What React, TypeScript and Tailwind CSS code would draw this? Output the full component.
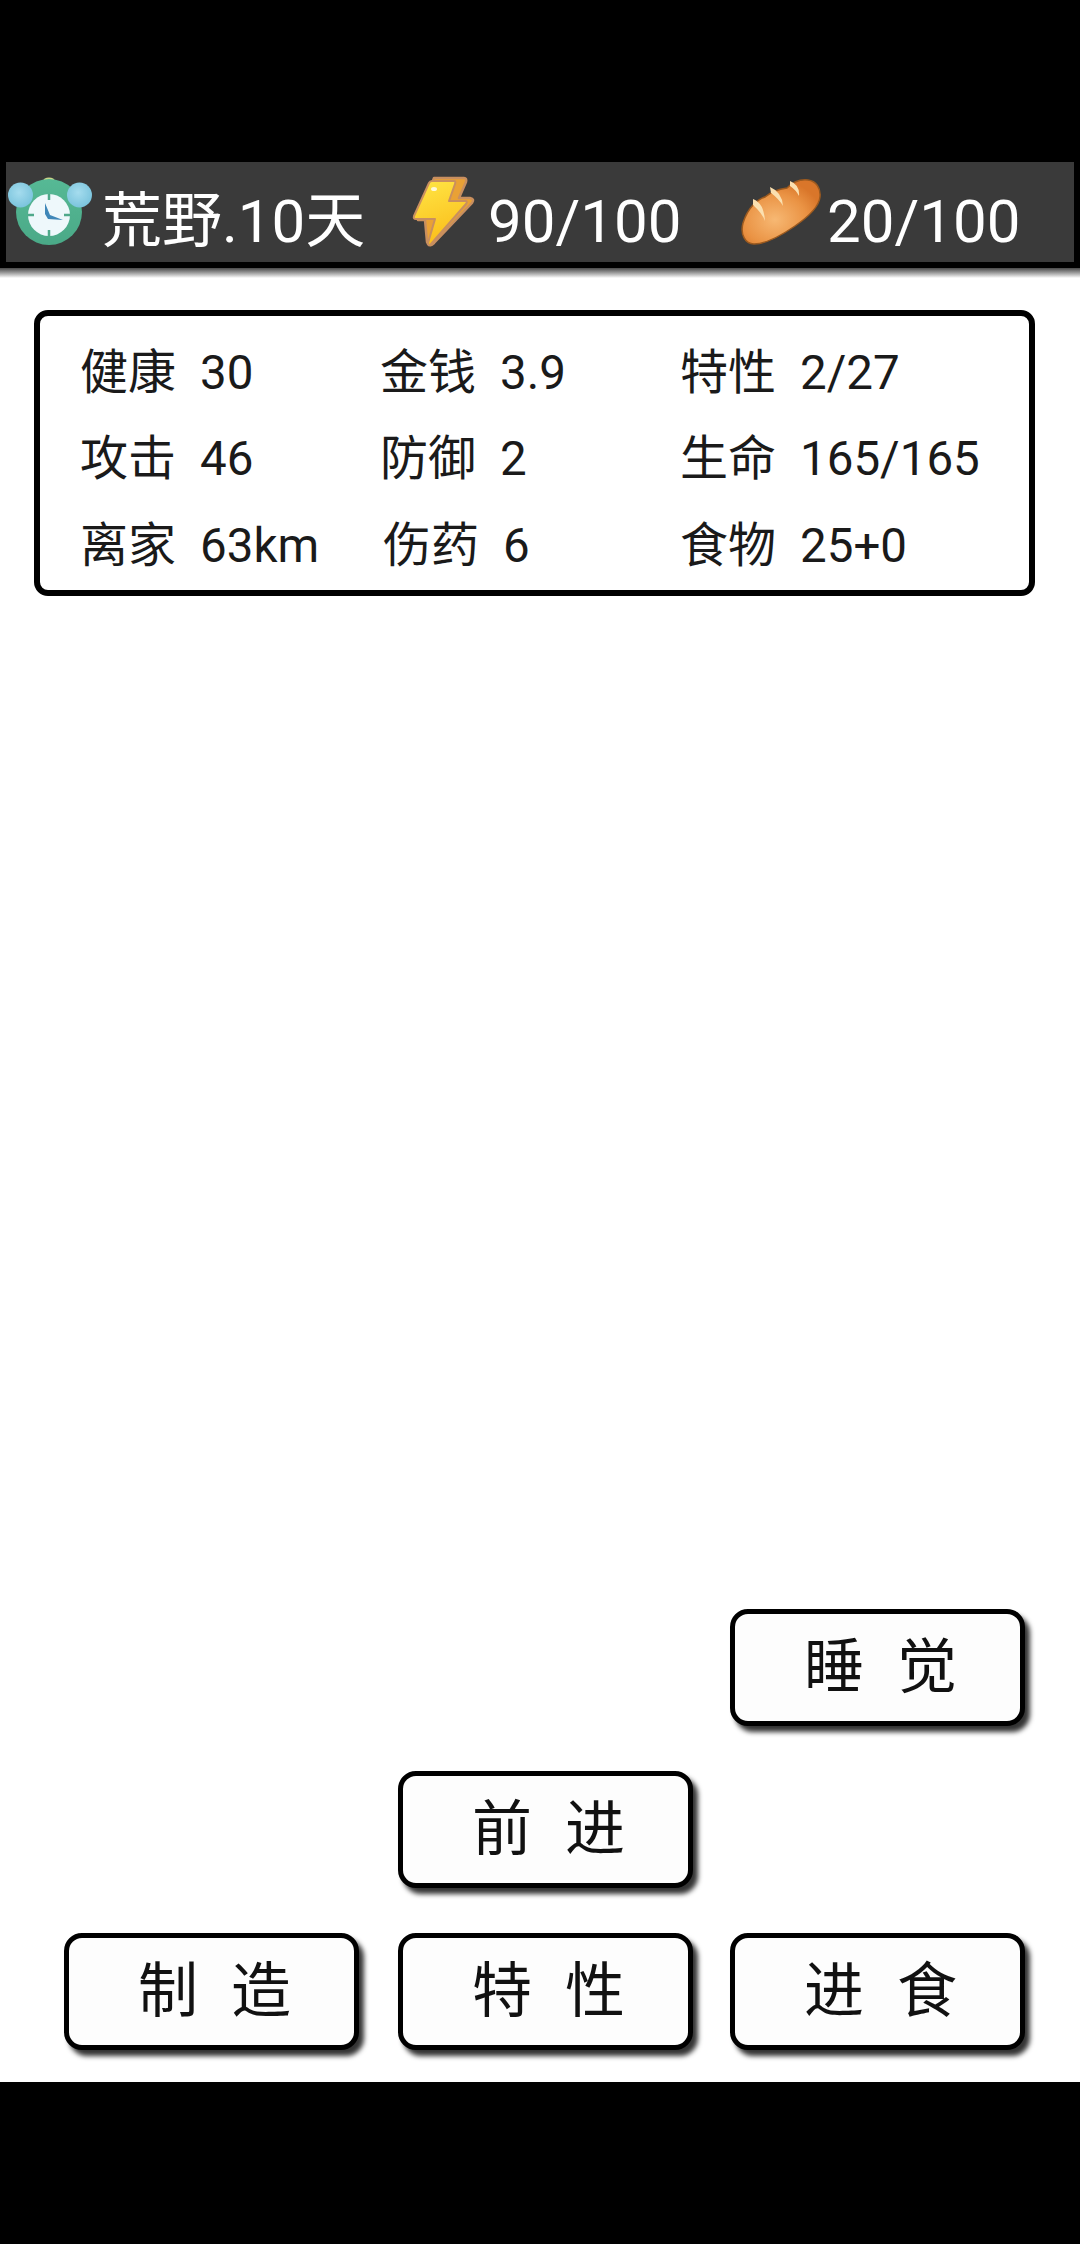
import React from "react";

const cjk = "font-['Roboto','Noto_Sans_CJK_SC',sans-serif]";

const stats = [
  [
    { label: "健康", value: "30" },
    { label: "金钱", value: "3.9" },
    { label: "特性", value: "2/27" },
  ],
  [
    { label: "攻击", value: "46" },
    { label: "防御", value: "2" },
    { label: "生命", value: "165/165" },
  ],
  [
    { label: "离家", value: "63km" },
    { label: "伤药", value: "6", shift: true },
    { label: "食物", value: "25+0" },
  ],
];

const ClockIcon = () => (
  <svg width="84" height="72" viewBox="0 0 84 72" className="shrink-0 blur-[0.6px]">
    <defs>
      <radialGradient id="bell" cx="0.45" cy="0.4" r="0.7">
        <stop offset="0" stopColor="#a5dcee" />
        <stop offset="1" stopColor="#74c0da" />
      </radialGradient>
      <linearGradient id="body" x1="0" y1="0" x2="0" y2="1">
        <stop offset="0" stopColor="#56b995" />
        <stop offset="1" stopColor="#4aa987" />
      </linearGradient>
    </defs>
    <ellipse cx="41" cy="5" rx="6" ry="3.5" fill="#c9d68a" />
    <circle cx="41" cy="36" r="33" fill="url(#body)" />
    <circle cx="12.5" cy="19" r="12.5" fill="url(#bell)" />
    <circle cx="71.5" cy="19" r="12.5" fill="url(#bell)" />
    <circle cx="41" cy="39" r="21" fill="#eef8fb" />
    <path d="M41 18v6M41 54v6M20 39h6M56 39h6" stroke="#4fa98a" strokeWidth="2.5" />
    <path d="M37 27l5 12 13 5-15-1-3-5z" fill="#3f87b8" />
  </svg>
);

const BoltIcon = () => (
  <svg width="66" height="72" viewBox="0 0 66 72" className="shrink-0 blur-[0.6px]">
    <defs>
      <linearGradient id="bolt" x1="0" y1="0" x2="0.3" y2="1">
        <stop offset="0" stopColor="#ffe646" />
        <stop offset="1" stopColor="#fbbf1c" />
      </linearGradient>
    </defs>
    <path
      d="M24 2h30q3 0 2 4l-7 16h11q5 1 2 5L24 67q-4 4-6 1l-1-2-2-22H8z"
      fill="#e9a135"
      stroke="#c98f5f"
      strokeWidth="2.5"
      strokeLinejoin="round"
    />
    <path
      d="M22 5h22q2 0 1 3l-6 17h16q3 0 1 3L21 68q-3 2-3-1l7-24H6q-3 0-2-3L19 7q1-2 3-2z"
      fill="url(#bolt)"
      stroke="#c98f5f"
      strokeWidth="2"
      strokeLinejoin="round"
    />
    <ellipse cx="24" cy="13" rx="3" ry="2" fill="#fff8d8" />
  </svg>
);

const BreadIcon = () => (
  <svg width="82" height="68" viewBox="0 0 82 66" className="shrink-0 blur-[0.6px]">
    <defs>
      <radialGradient id="bread" cx="0.42" cy="0.62" r="0.62">
        <stop offset="0" stopColor="#f7b873" />
        <stop offset="0.65" stopColor="#ea9344" />
        <stop offset="1" stopColor="#d9762a" />
      </radialGradient>
    </defs>
    <path
      d="M3 44C8 28 18 20 25 18 32 12 40 10 47 9 52 4 60 0 68 1 76 2 81 9 80 18 79 28 68 38 55 47 42 56 26 65 14 65 5 65 0 55 3 44z"
      fill="url(#bread)"
      stroke="#9c5a1f"
      strokeWidth="1.5"
    />
    <path d="M13 20q11 4 12 22-3-8-12-16zM30 8q12 5 13 19-4-7-12-13zM50 2q10 4 9 15-3-6-9-10z" fill="#fbe0b0" />
  </svg>
);

const ActionButton = ({ label, extra = "" }: { label: [string, string]; extra?: string }) => (
  <button
    className={`flex h-[117px] w-[295px] items-center justify-center gap-[33px] rounded-[18px] border-[5px] border-black bg-[#fdfdfd] pl-[6px] text-[60px] leading-none text-[#111] shadow-[5px_6px_5px_rgba(0,0,0,0.8)] ${cjk} ${extra}`}
  >
    <span>{label[0]}</span>
    <span>{label[1]}</span>
  </button>
);

export default function App() {
  return (
    <div className={`flex h-[2244px] w-[1080px] flex-col bg-black ${cjk}`}>
      <div className="h-[162px] shrink-0" />

      <header className="h-[106px] shrink-0 border-b-[6px] border-black px-[6px] text-white">
        <div className="flex h-full w-full items-center bg-[#3a3a3a] pl-[2px] text-[60px] leading-none">
          <ClockIcon />
          <span className="ml-[10px] w-[270px] whitespace-nowrap pt-[20px]">荒野.10天</span>
          <span className="ml-[38px]"><BoltIcon /></span>
          <span className="ml-[12px] w-[190px] whitespace-nowrap pt-[20px]">90/100</span>
          <span className="ml-[62px]"><BreadIcon /></span>
          <span className="ml-[5px] whitespace-nowrap pt-[20px]">20/100</span>
        </div>
      </header>

      <main className="flex flex-1 flex-col bg-white">
        <div className="h-[10px] shrink-0 bg-gradient-to-b from-[#4a4a4a] to-white" />

        <section className="ml-[34px] mt-[32px] flex h-[286px] w-[1001px] flex-col justify-center rounded-[14px] border-[6px] border-black pl-[40px] pt-[13px] text-[47.5px] leading-[86.5px] text-[#1a1a1a]">
          {stats.map((row) => (
            <div key={row[0].label} className="flex">
              {row.map((s) => (
                <div
                  key={s.label}
                  className={`flex w-[300px] items-baseline whitespace-nowrap ${s.shift ? "pl-[3px]" : ""}`}
                >
                  <span className="w-[120px] text-[48px]">{s.label}</span>
                  <span>{s.value}</span>
                </div>
              ))}
            </div>
          ))}
        </section>

        <div className="flex-1" />

        <div className="flex flex-col gap-[45px] pb-[32px]">
          <div className="flex pl-[730px]">
            <ActionButton label={["睡", "觉"]} />
          </div>
          <div className="flex pl-[398px]">
            <ActionButton label={["前", "进"]} />
          </div>
          <div className="flex pl-[64px]">
            <ActionButton label={["制", "造"]} />
            <ActionButton label={["特", "性"]} extra="ml-[39px]" />
            <ActionButton label={["进", "食"]} extra="ml-[37px]" />
          </div>
        </div>
      </main>

      <div className="h-[162px] shrink-0" />
    </div>
  );
}
